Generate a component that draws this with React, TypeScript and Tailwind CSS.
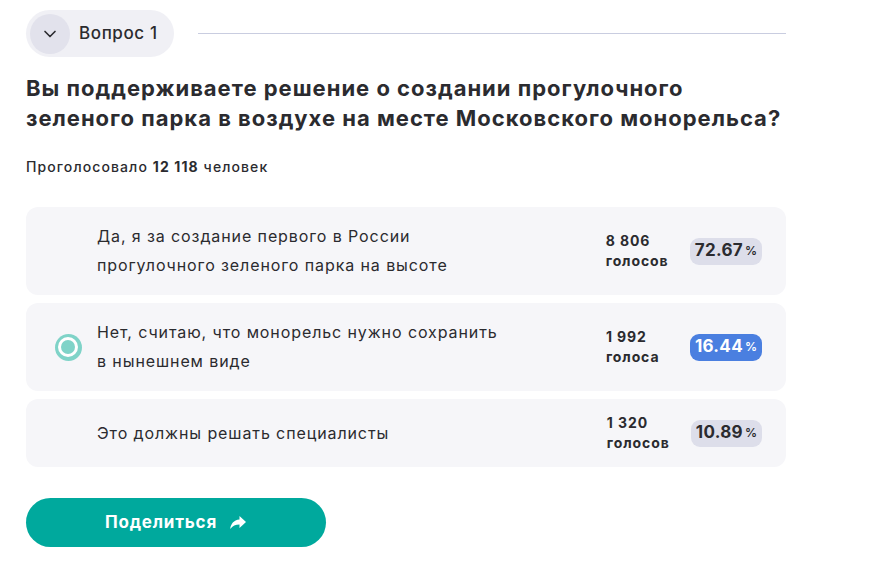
import { ChevronDown } from "lucide-react";

type Option = {
  id: string;
  lines: string[];
  votes: string;
  unit: string;
  percent: string;
  selected?: boolean;
};

const options: Option[] = [
  {
    id: "yes",
    lines: ["Да, я за создание первого в России", "прогулочного зеленого парка на высоте"],
    votes: "8 806",
    unit: "голосов",
    percent: "72.67",
  },
  {
    id: "no",
    lines: ["Нет, считаю, что монорельс нужно сохранить", "в нынешнем виде"],
    votes: "1 992",
    unit: "голоса",
    percent: "16.44",
    selected: true,
  },
  {
    id: "experts",
    lines: ["Это должны решать специалисты"],
    votes: "1 320",
    unit: "голосов",
    percent: "10.89",
  },
];

function ShareArrow() {
  return (
    <svg width="18" height="16" viewBox="0 0 18 16" fill="currentColor" aria-hidden="true">
      <path d="M10.5 1 L17 7 L10.5 13 V9.4 C6.5 9.4 3.6 10.6 1.2 14 C1.8 9 4.6 5.2 10.5 4.6 Z" />
    </svg>
  );
}

export default function App() {
  return (
    <div
      className="min-h-screen bg-white text-[#2b2b2f]"
      style={{ fontFamily: "Inter, 'Noto Sans', sans-serif" }}
    >
      <div className="w-[760px] ml-[26px] pt-[10px]">
        <div className="flex items-center gap-6">
          <div className="flex items-center gap-[9px] rounded-full bg-[#f0f0f5] h-[47px] pl-1 pr-4">
            <span className="flex items-center justify-center w-[40px] h-[40px] rounded-full bg-[#e2e2ec]">
              <ChevronDown size={20} strokeWidth={2} className="text-[#2b2b2f]" />
            </span>
            <span className="text-[17px] font-medium tracking-[0.6px]">Вопрос 1</span>
          </div>
          <div className="flex-1 h-px bg-[#c9cde0]" />
        </div>

        <h2 className="mt-[16px] text-[22px] font-bold leading-[30px] tracking-[1px]">
          Вы поддерживаете решение о создании прогулочного
          <br />
          зеленого парка в воздухе на месте Московского монорельса?
        </h2>

        <p className="mt-[23px] text-[14px] font-medium tracking-[1.1px]">
          Проголосовало <span className="font-bold">12 118</span> человек
        </p>

        <div className="mt-[30px] flex flex-col gap-2">
          {options.map((option) => (
            <div
              key={option.id}
              className={`flex items-center rounded-[12px] bg-[#f6f6f9] pr-6 ${
                option.lines.length > 1 ? "h-[88px]" : "h-[68px]"
              }`}
            >
              <div className="w-[71px] flex justify-center pl-[13px]">
                {option.selected ? (
                  <span className="flex items-center justify-center w-[27px] h-[27px] rounded-full bg-[#7fd3c8]">
                    <span className="flex items-center justify-center w-[20px] h-[20px] rounded-full bg-white">
                      <span className="w-[14px] h-[14px] rounded-full bg-[#7fd3c8]" />
                    </span>
                  </span>
                ) : null}
              </div>
              <div className="flex-1 text-[16px] leading-[29px] tracking-[0.9px]">
                {option.lines.map((line) => (
                  <div key={line}>{line}</div>
                ))}
              </div>
              <div className="w-[84px] text-[14px] font-bold leading-[20px] tracking-[0.9px]">
                <div>{option.votes}</div>
                <div>{option.unit}</div>
              </div>
              <span
                className={`flex items-center rounded-[9px] pl-[5px] pr-[5px] h-[27px] ${
                  option.selected ? "bg-[#4a7fe0] text-white" : "bg-[#dddeea] text-[#2b2b2f]"
                }`}
              >
                <span className="text-[17px] font-bold tracking-[0.3px]">{option.percent}</span>
                <span className="text-[12px] font-semibold ml-[2px]">%</span>
              </span>
            </div>
          ))}
        </div>

        <button
          type="button"
          className="mt-[31px] flex items-center justify-center gap-3 w-[300px] h-[49px] rounded-full bg-[#00a99d] text-white text-[17px] font-bold tracking-[0.8px]"
        >
          Поделиться
          <ShareArrow />
        </button>
      </div>
    </div>
  );
}
